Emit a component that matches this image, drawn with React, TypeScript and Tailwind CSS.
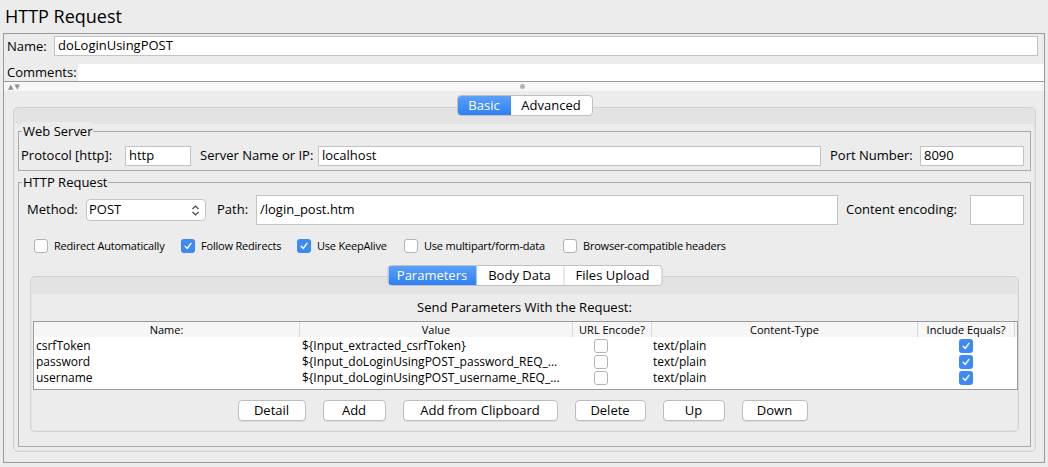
import React from 'react';

const font = { fontFamily: '"Open Sans", "DejaVu Sans", sans-serif' };

function Field({ value, className }: { value?: string; className: string }) {
  return (
    <div className={`bg-white border border-[#c2c2c2] flex items-center px-[3px] text-[13px] text-black shrink-0 ${className}`}>
      {value}
    </div>
  );
}

function Check({ checked }: { checked: boolean }) {
  if (checked) {
    return (
      <span className="w-[14px] h-[14px] rounded-[3px] bg-[#3d89f6] flex items-center justify-center shrink-0">
        <svg width="10" height="10" viewBox="0 0 10 10">
          <path d="M2.2 5.3 L4.2 7.5 L8 2.3" stroke="white" strokeWidth="1.4" fill="none" strokeLinecap="round" strokeLinejoin="round" />
        </svg>
      </span>
    );
  }
  return <span className="w-[14px] h-[14px] rounded-[3px] bg-white border border-[#b3b3b3] shrink-0" />;
}

function Group({ title, className, children }: { title: string; className: string; children: React.ReactNode }) {
  return (
    <div className={`relative border border-[#a8a8a8] ${className}`}>
      <span className="absolute left-[3px] top-[-10px] bg-[#ececec] px-[1px] text-[13px] leading-[18px]">{title}</span>
      {children}
    </div>
  );
}

function Btn({ label, w }: { label: string; w: string }) {
  return (
    <div className={`${w} h-[21px] bg-white border border-[#bcbcbc] rounded-[4px] flex items-center justify-center text-[13px] shadow-[0_1px_0_rgba(0,0,0,0.06)]`}>
      {label}
    </div>
  );
}

function Segmented({ tabs }: { tabs: { label: string; w: string }[] }) {
  return (
    <div className="absolute left-1/2 -translate-x-1/2 top-0 flex h-[21px] rounded-[4px] border border-[#c0c0c0] bg-white text-[13px] z-10 overflow-hidden">
      {tabs.map((t, i) => (
        <div
          key={t.label}
          className={`${t.w} flex items-center justify-center ${
            i === 0 ? 'bg-gradient-to-b from-[#5aa0f8] to-[#2f7ff3] text-white' : 'text-black'
          } ${i > 1 ? 'border-l border-[#d4d4d4]' : ''}`}
        >
          {t.label}
        </div>
      ))}
    </div>
  );
}

const rows = [
  { name: 'csrfToken', value: '${Input_extracted_csrfToken}' },
  { name: 'password', value: '${Input_doLoginUsingPOST_password_REQ_...' },
  { name: 'username', value: '${Input_doLoginUsingPOST_username_REQ_...' },
];

export default function App() {
  return (
    <div className="w-[1048px] h-[467px] bg-[#ececec] text-black overflow-hidden" style={font}>
      <div className="h-[33px] pl-[5px] pt-[4px] text-[18px] leading-[24px]">HTTP Request</div>

      <div className="ml-[3px] w-[1042px] h-[430px] border border-[#9a9a9a]">
        {/* name / comments */}
        <div className="border-b border-[#9a9a9a]">
          <div className="h-[25px] flex items-start pt-[2px] pl-[3px] pr-[4px]">
            <span className="text-[13px] leading-[20px] w-[47px]">Name:</span>
            <Field value="doLoginUsingPOST" className="w-[984px] h-[20px]" />
          </div>
          <div className="h-[22px] flex items-end pl-[3px]">
            <span className="text-[13px] leading-[18px] w-[71px]">Comments:</span>
            <div className="flex-1 h-[17px] bg-white" />
          </div>
        </div>
        {/* splitter */}
        <div className="h-[9px] bg-[#f7f7f7] relative">
          <span className="absolute left-[4px] top-[0px] text-[7px] leading-[9px] text-[#8f8f8f] tracking-[1px]">▲▼</span>
          <span className="absolute left-[516px] top-[2px] w-[5px] h-[5px] rounded-full bg-[#b3b3b3]" />
        </div>

        {/* main tabbed pane */}
        <div className="relative pt-[16px] pl-[9px]">
          <div className="absolute left-[9px] w-[1023px] top-[4px] h-[21px]">
            <Segmented tabs={[{ label: 'Basic', w: 'w-[53px]' }, { label: 'Advanced', w: 'w-[81px]' }]} />
          </div>
          <div className="w-[1023px] h-[345px] rounded-[5px] border border-[#d2d2d2] bg-[#e3e3e3] pt-[16px] px-[1px] pb-[1px]">
            <div className="h-full bg-[#ececec] pt-[7px] px-[3px]">
              {/* web server */}
              <Group title="Web Server" className="h-[40px] pt-[14px] pl-[2px]">
                <div className="flex items-center h-[20px]">
                  <span className="text-[13px] w-[104px]">Protocol [http]:</span>
                  <Field value="http" className="w-[66px] h-[20px]" />
                  <span className="text-[13px] ml-[9px] w-[118px]">Server Name or IP:</span>
                  <Field value="localhost" className="w-[503px] h-[20px]" />
                  <span className="text-[13px] ml-[9px] w-[90px]">Port Number:</span>
                  <Field value="8090" className="w-[104px] h-[20px]" />
                </div>
              </Group>

              {/* http request */}
              <Group title="HTTP Request" className="mt-[11px] h-[265px] pl-[8px] pt-[12px]">
                <div className="flex items-center h-[30px]">
                  <span className="text-[13px] w-[59px]">Method:</span>
                  <div className="w-[120px] h-[22px] bg-white border border-[#c4c4c4] rounded-[4px] flex items-center justify-between pl-[2px] pr-[5px] text-[13px] shrink-0">
                    <span>POST</span>
                    <svg width="9" height="13" viewBox="0 0 9 13">
                      <path d="M1.5 5 L4.5 2 L7.5 5 M1.5 8 L4.5 11 L7.5 8" stroke="#444" strokeWidth="1.2" fill="none" />
                    </svg>
                  </div>
                  <span className="text-[13px] ml-[11px] w-[39px]">Path:</span>
                  <Field value="/login_post.htm" className="w-[582px] h-[30px]" />
                  <span className="text-[13px] ml-[8px] w-[124px]">Content encoding:</span>
                  <Field className="w-[54px] h-[30px]" />
                </div>
                <div className="flex items-center h-[14px] mt-[14px] text-[11px] tracking-[-0.2px] pl-[7px]">
                  <Check checked={false} />
                  <span className="ml-[6px] w-[127px]">Redirect Automatically</span>
                  <Check checked />
                  <span className="ml-[6px] w-[96px]">Follow Redirects</span>
                  <Check checked />
                  <span className="ml-[6px] w-[87px]">Use KeepAlive</span>
                  <Check checked={false} />
                  <span className="ml-[6px] w-[139px]">Use multipart/form-data</span>
                  <Check checked={false} />
                  <span className="ml-[6px]">Browser-compatible headers</span>
                </div>

                {/* inner tabbed pane */}
                <div className="relative mt-[12px] pt-[11px] pl-[3px]">
                  <div className="absolute left-[3px] w-[989px] top-0 h-[21px]">
                    <Segmented
                      tabs={[
                        { label: 'Parameters', w: 'w-[88px]' },
                        { label: 'Body Data', w: 'w-[87px]' },
                        { label: 'Files Upload', w: 'w-[98px]' },
                      ]}
                    />
                  </div>
                  <div className="w-[989px] h-[156px] rounded-[5px] border border-[#d2d2d2] bg-[#e3e3e3] pt-[17px] px-[1px] pb-[1px]">
                    <div className="h-full bg-[#ececec] px-[1px]">
                      <div className="h-[27px] flex items-center justify-center text-[13px]">Send Parameters With the Request:</div>
                      <div className="w-[985px] h-[69px] bg-white border border-[#9a9a9a] text-[12px]">
                        <div className="flex h-[15px] bg-[#f6f6f6] leading-[15px] text-[11px]">
                          <div className="w-[266px] text-center border-r border-[#d8d8d8]">Name:</div>
                          <div className="w-[272px] text-center">Value</div>
                          <div className="w-[80px] text-center border-x border-[#d8d8d8]">URL Encode?</div>
                          <div className="w-[266px] text-center border-r border-[#d8d8d8]">Content-Type</div>
                          <div className="w-[97px] text-center border-r border-[#d8d8d8]">Include Equals?</div>
                        </div>
                        <div className="pt-[1px]">
                          {rows.map((r) => (
                            <div key={r.name} className="flex h-[16px] items-center leading-[16px]">
                              <div className="w-[266px] pl-[2px]">{r.name}</div>
                              <div className="w-[272px] pl-[2px]">{r.value}</div>
                              <div className="w-[80px] pl-[22px] flex"><Check checked={false} /></div>
                              <div className="w-[266px] pl-[1px]">text/plain</div>
                              <div className="w-[97px] pl-[41px] flex"><Check checked /></div>
                            </div>
                          ))}
                        </div>
                      </div>
                      <div className="flex justify-center gap-[17px] mt-[10px] pr-[4px]">
                        <Btn label="Detail" w="w-[68px]" />
                        <Btn label="Add" w="w-[63px]" />
                        <Btn label="Add from Clipboard" w="w-[155px]" />
                        <Btn label="Delete" w="w-[71px]" />
                        <Btn label="Up" w="w-[62px]" />
                        <Btn label="Down" w="w-[66px]" />
                      </div>
                    </div>
                  </div>
                </div>
              </Group>
            </div>
          </div>
        </div>
      </div>
    </div>
  );
}
